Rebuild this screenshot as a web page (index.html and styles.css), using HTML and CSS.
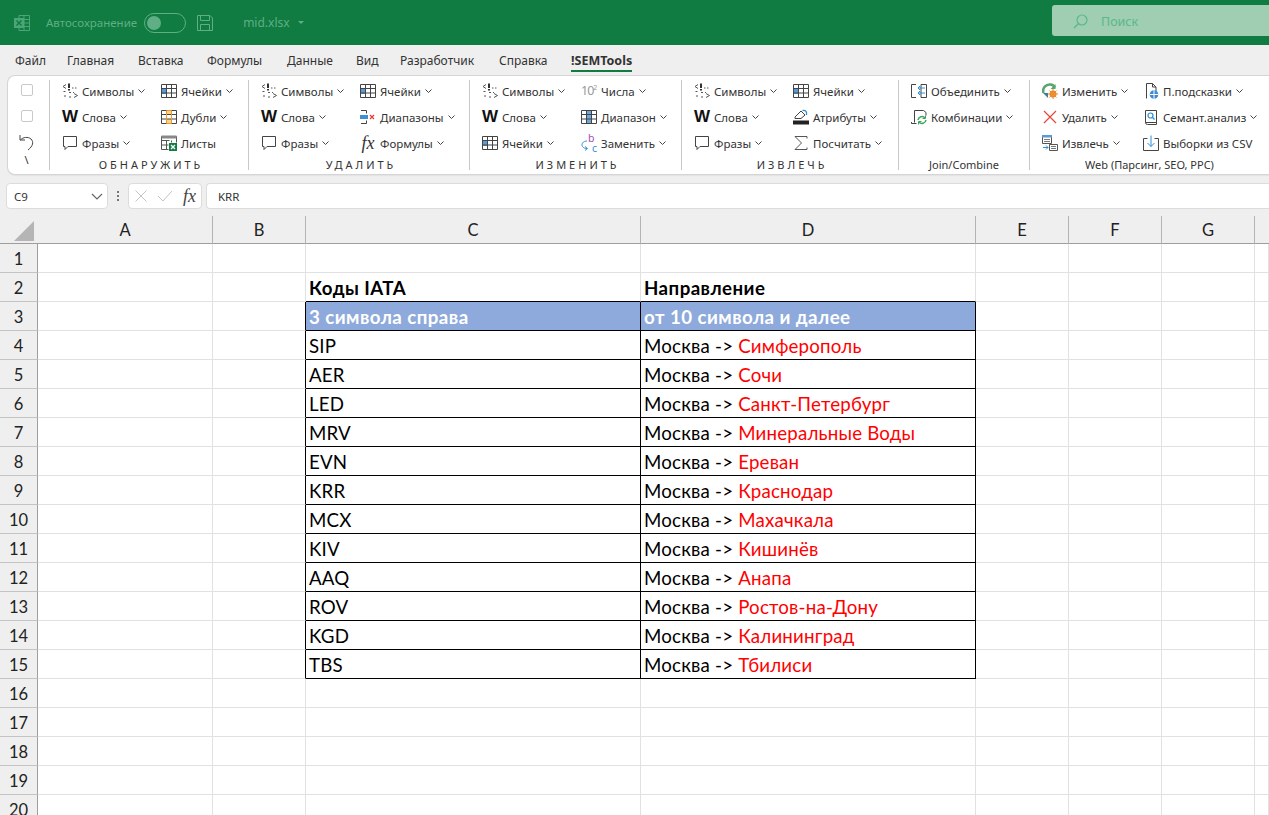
FILE: index.html
```html
<!DOCTYPE html>
<html lang="en">
<head>
    <meta charset="UTF-8">
    <meta name="viewport" content="width=device-width, initial-scale=1.0">
    <title>mid.xlsx</title>
    <link rel="stylesheet" href="styles.css">
</head>
<body>
    <svg class="defs" width="0" height="0">
        <symbol id="chev" viewBox="0 0 7 4"><path d="M.5.5 3.5 3.5 6.5.5" fill="none" stroke="#444"/></symbol>
        <symbol id="chars" viewBox="0 0 16 16"><g fill="none" stroke="#555"><path d="M4 1.500 1 3.500 4 5.500M10 5h1.500M13 5h1.500M1.500 8.500h2M7 9.500h2M11 9.500h1M7 14h2M2 13h2M12 10.500 15.500 12.500 12 14.500"/></g><path d="M6 .5h2v4.500H6zM6 6h2v1.500H6z" fill="#333"/></symbol>
        <symbol id="bubble" viewBox="0 0 16 16"><path d="M1.500 1.500h13v10H6l-3 3v-3H1.500z" fill="#fff" stroke="#444"/></symbol>
        <symbol id="cells" viewBox="0 0 16 16"><rect x="1" y="6" width="5" height="5" fill="#5b9bd5"/><path d="M.5 1.500h15v13H.5zM5.500 1.500v13M10.500 1.500v13M.5 5.500h15M.5 10h15" fill="none" stroke="#444"/></symbol>
        <symbol id="dupes" viewBox="0 0 16 16"><rect x="5.500" y="1.500" width="5" height="4" fill="#fbd38a"/><rect x="5.500" y="10" width="5" height="4.500" fill="#fbd38a"/><path d="M.5 1.500h15v13H.5zM.5 5.500h15M.5 10h15" fill="none" stroke="#444"/><path d="M5.500 1.500h5v13h-5z" fill="none" stroke="#ed9b2c"/></symbol>
        <symbol id="sheets" viewBox="0 0 16 16"><path d="M.5 1.500h15M.5 1.500v13h7M.5 5.500h8M.5 10h7M5.500 5.500v9M10.500 5.500v2M15.500 1.500v6" fill="none" stroke="#555"/><rect x=".5" y=".5" width="15" height="3" fill="#888"/><rect x="8" y="8" width="8" height="8" fill="#107c41"/><path d="M10 10 14 14M14 10 10 14" stroke="#fff" stroke-width="1.300"/></symbol>
        <symbol id="range-x" viewBox="0 0 16 16"><path d="M1 1.500h5.500v3M1 14.500h5.500v-3" fill="none" stroke="#444"/><rect x="0" y="6" width="8" height="4" fill="#3d8fd6"/><path d="M10 6l4 4M14 6l-4 4" stroke="#e53935" stroke-width="1.200"/></symbol>
        <symbol id="range" viewBox="0 0 16 16"><rect x="5.500" y="1.500" width="5" height="13" fill="#6fa8dc"/><path d="M.5 1.500h15v13H.5zM5.500 1.500v13M10.500 1.500v13M.5 5.500h15M.5 10h15" fill="none" stroke="#444"/></symbol>
        <symbol id="replace" viewBox="0 0 16 16"><path d="M6 6C2 6 0 9 1.500 11.500 2.500 13 4 13.500 6 13.500M4 11.500 6.500 13.500 4 15.500" fill="none" stroke="#2d8fd8"/></symbol>
        <symbol id="fill" viewBox="0 0 16 16"><path d="M2 8 8 2l4 4-4 3.500H2z" fill="#fff" stroke="#444"/><path d="M9.500 1.500C13 1 14 3 13.500 6" fill="none" stroke="#2d8fd8" stroke-width="1.300"/><rect y="11.500" width="16" height="4" fill="#222"/></symbol>
        <symbol id="sum" viewBox="0 0 16 16"><path d="M14 3.500V1.500H2L8.500 8 2 14.500h12v-2" fill="none" stroke="#555"/></symbol>
        <symbol id="merge" viewBox="0 0 16 16"><path d="M5 1.500H.5v13H5M10 1.500v13M10 1.500h5.500v13H10" fill="none" stroke="#444"/><path d="M14 5H7M9 3 7 5l2 2M14 10H7M9 8l-2 2 2 2" fill="none" stroke="#2d8fd8"/></symbol>
        <symbol id="combo" viewBox="0 0 16 16"><path d="M3.500 13.500V1.500h9l2.500 2v3M.5 13v1.500h5" fill="none" stroke="#444"/><path d="M7 11a4 4 0 0 1 7-2M15 11a4 4 0 0 1-7 2" fill="none" stroke="#3ca55c" stroke-width="1.500"/><path d="M14.500 6.500v3h-3M7.500 15.500v-3h3" fill="none" stroke="#3ca55c"/></symbol>
        <symbol id="edit" viewBox="0 0 16 16"><path d="M1.500 10C0 5 4 1 8.500 1.500c2 .2 3.500 1.200 4.500 3" fill="none" stroke="#59a56f" stroke-width="2.500"/><path d="M13.500 1v5h-5z" fill="#59a56f"/><path d="M1 10h5v5z" fill="#3f7f8f"/><circle cx="11" cy="11" r="3.500" fill="#ed8b2c"/><circle cx="11" cy="11" r="1.300" fill="#fff"/><path d="M11 6v10M6 11h10M7.500 7.500l7 7M14.500 7.500l-7 7" stroke="#ed8b2c"/></symbol>
        <symbol id="del" viewBox="0 0 16 16"><path d="M2 2 14 14M14 2 2 14" stroke="#e8443a" stroke-width="1.200"/></symbol>
        <symbol id="extract" viewBox="0 0 16 16"><path d="M.5.5h9v8h-9z" fill="#fff" stroke="#555"/><rect y="0" width="10" height="2.500" fill="#5b9bd5"/><path d="M2 4.500h6M2 6.500h6" stroke="#777"/><path d="M7.500 9.500h8v6h-8z" fill="#fff" stroke="#555"/><path d="M9 11.500h5M9 13.500h5" stroke="#777"/><path d="M1 12.500h5M4 10.500l2 2-2 2" fill="none" stroke="#2d8fd8"/></symbol>
        <symbol id="tips" viewBox="0 0 16 16"><path d="M3.500 15.500V.5h6l3.500 3.500v4M9.500.5V4H13" fill="none" stroke="#444"/><circle cx="11" cy="11.500" r="4.300" fill="#3a8ad6"/><path d="M6.700 11.500h8.600M11 7.200v8.600" stroke="#fff"/></symbol>
        <symbol id="semant" viewBox="0 0 16 16"><path d="M2.500 13.500V1.500h11v14h-9a2 2 0 0 1-2-2h11" fill="none" stroke="#444"/><circle cx="7.500" cy="6.500" r="2.500" fill="none" stroke="#2d8fd8" stroke-width="1.200"/><path d="M9.300 8.300 11.500 10.500" stroke="#2d8fd8" stroke-width="1.300"/></symbol>
        <symbol id="csv" viewBox="0 0 16 16"><path d="M.5 3.500h4M11.500 3.500h4v12H.5v-12" fill="none" stroke="#444"/><path d="M8 .5v11M4.500 8 8 11.500 11.500 8" fill="none" stroke="#2d8fd8"/></symbol>
    </svg>

    <header class="titlebar">
        <svg class="xl-logo" width="16" height="16" viewBox="0 0 16 16"><path d="M5 .5h10.500v15H5zM5 4.500h10.500M5 8h10.500M5 11.500h10.500M10 .5v15" fill="none" stroke="#4ba578"/><rect y="3" width="10" height="10" fill="#4ba578"/><path d="M2.500 5.500l5 5M7.500 5.500l-5 5" stroke="#107c41" stroke-width="1.500"/></svg>
        <span class="autosave">Автосохранение</span>
        <span class="toggle"><span class="knob"></span></span>
        <svg class="save" width="16" height="16" viewBox="0 0 16 16"><path d="M.5.500h12.500l2.500 2.500v12.500H.5zM3.500.5v5h9v-5M3.500 15.500v-6h9v6" fill="none" stroke="#5fae85"/></svg>
        <span class="filename">mid.xlsx</span>
        <span class="caret"></span>
        <div class="search">
            <svg width="15" height="15" viewBox="0 0 15 15"><circle cx="9" cy="6" r="5" fill="none" stroke="#5cb888" stroke-width="1.200"/><path d="M5.500 9.500 1 14" stroke="#5cb888" stroke-width="1.400"/></svg>
            <span>Поиск</span>
        </div>
    </header>

    <nav class="tabs">
        <span class="tab">Файл</span>
        <span class="tab">Главная</span>
        <span class="tab">Вставка</span>
        <span class="tab">Формулы</span>
        <span class="tab">Данные</span>
        <span class="tab">Вид</span>
        <span class="tab">Разработчик</span>
        <span class="tab">Справка</span>
        <span class="tab active">!SEMTools</span>
    </nav>

    <section class="ribbon">
        <div class="group group-misc">
            <span class="check"></span>
            <span class="check"></span>
            <svg class="undo" width="16" height="18" viewBox="0 0 16 18"><path d="M1 2v5h5M1.500 7C4 4 9 3.500 12 6c3 3 2 7-3 11" fill="none" stroke="#444"/></svg>
            <span class="slash">\</span>
        </div>

        <div class="group group-find">
            <div class="items">
                <span class="item"><svg class="ic"><use href="#chars"/></svg>Символы<svg class="chev"><use href="#chev"/></svg></span>
                <span class="item"><svg class="ic"><use href="#cells"/></svg>Ячейки<svg class="chev"><use href="#chev"/></svg></span>
                <span class="item"><span class="ic w">W</span>Слова<svg class="chev"><use href="#chev"/></svg></span>
                <span class="item"><svg class="ic"><use href="#dupes"/></svg>Дубли<svg class="chev"><use href="#chev"/></svg></span>
                <span class="item"><svg class="ic"><use href="#bubble"/></svg>Фразы<svg class="chev"><use href="#chev"/></svg></span>
                <span class="item"><svg class="ic"><use href="#sheets"/></svg>Листы</span>
            </div>
            <div class="label spaced">ОБНАРУЖИТЬ</div>
        </div>

        <div class="group group-del">
            <div class="items">
                <span class="item"><svg class="ic"><use href="#chars"/></svg>Символы<svg class="chev"><use href="#chev"/></svg></span>
                <span class="item"><svg class="ic"><use href="#cells"/></svg>Ячейки<svg class="chev"><use href="#chev"/></svg></span>
                <span class="item"><span class="ic w">W</span>Слова<svg class="chev"><use href="#chev"/></svg></span>
                <span class="item"><svg class="ic"><use href="#range-x"/></svg>Диапазоны<svg class="chev"><use href="#chev"/></svg></span>
                <span class="item"><svg class="ic"><use href="#bubble"/></svg>Фразы<svg class="chev"><use href="#chev"/></svg></span>
                <span class="item"><span class="ic fx">fx</span>Формулы<svg class="chev"><use href="#chev"/></svg></span>
            </div>
            <div class="label spaced">УДАЛИТЬ</div>
        </div>

        <div class="group group-change">
            <div class="items">
                <span class="item"><svg class="ic"><use href="#chars"/></svg>Символы<svg class="chev"><use href="#chev"/></svg></span>
                <span class="item"><span class="ic pow">10<sup>2</sup></span>Числа<svg class="chev"><use href="#chev"/></svg></span>
                <span class="item"><span class="ic w">W</span>Слова<svg class="chev"><use href="#chev"/></svg></span>
                <span class="item"><svg class="ic"><use href="#range"/></svg>Диапазон<svg class="chev"><use href="#chev"/></svg></span>
                <span class="item"><svg class="ic"><use href="#cells"/></svg>Ячейки<svg class="chev"><use href="#chev"/></svg></span>
                <span class="item"><span class="ic repl"><svg class="ic"><use href="#replace"/></svg><b class="let-b">b</b><b class="let-c">c</b></span>Заменить<svg class="chev"><use href="#chev"/></svg></span>
            </div>
            <div class="label spaced">ИЗМЕНИТЬ</div>
        </div>

        <div class="group group-extract">
            <div class="items">
                <span class="item"><svg class="ic"><use href="#chars"/></svg>Символы<svg class="chev"><use href="#chev"/></svg></span>
                <span class="item"><svg class="ic"><use href="#cells"/></svg>Ячейки<svg class="chev"><use href="#chev"/></svg></span>
                <span class="item"><span class="ic w">W</span>Слова<svg class="chev"><use href="#chev"/></svg></span>
                <span class="item"><svg class="ic"><use href="#fill"/></svg>Атрибуты<svg class="chev"><use href="#chev"/></svg></span>
                <span class="item"><svg class="ic"><use href="#bubble"/></svg>Фразы<svg class="chev"><use href="#chev"/></svg></span>
                <span class="item"><svg class="ic"><use href="#sum"/></svg>Посчитать<svg class="chev"><use href="#chev"/></svg></span>
            </div>
            <div class="label spaced">ИЗВЛЕЧЬ</div>
        </div>

        <div class="group group-join">
            <div class="items single">
                <span class="item"><svg class="ic"><use href="#merge"/></svg>Объединить<svg class="chev"><use href="#chev"/></svg></span>
                <span class="item"><svg class="ic"><use href="#combo"/></svg>Комбинации<svg class="chev"><use href="#chev"/></svg></span>
            </div>
            <div class="label">Join/Combine</div>
        </div>

        <div class="group group-web">
            <div class="items">
                <span class="item"><svg class="ic"><use href="#edit"/></svg>Изменить<svg class="chev"><use href="#chev"/></svg></span>
                <span class="item"><svg class="ic"><use href="#tips"/></svg>П.подсказки<svg class="chev"><use href="#chev"/></svg></span>
                <span class="item"><svg class="ic"><use href="#del"/></svg>Удалить<svg class="chev"><use href="#chev"/></svg></span>
                <span class="item"><svg class="ic"><use href="#semant"/></svg>Семант.анализ<svg class="chev"><use href="#chev"/></svg></span>
                <span class="item"><svg class="ic"><use href="#extract"/></svg>Извлечь<svg class="chev"><use href="#chev"/></svg></span>
                <span class="item"><svg class="ic"><use href="#csv"/></svg>Выборки из CSV</span>
            </div>
            <div class="label">Web (Парсинг, SEO, PPC)</div>
        </div>
    </section>

    <div class="formula-bar">
        <div class="name-box">C9<svg width="12" height="7" viewBox="0 0 12 7"><path d="M1 1l5 5 5-5" fill="none" stroke="#666" stroke-width="1.200"/></svg></div>
        <span class="grip"></span>
        <div class="fx-box">
            <svg width="12" height="12" viewBox="0 0 12 12"><path d="M.5.5l11 11M11.500.5l-11 11" stroke="#c4c4c4"/></svg>
            <svg width="16" height="12" viewBox="0 0 16 12"><path d="M1 6l5 5L15 1" fill="none" stroke="#c4c4c4"/></svg>
            <span class="fx-sign">fx</span>
        </div>
        <div class="formula-input">KRR</div>
    </div>

    <table class="sheet">
        <colgroup>
            <col class="c-head"><col class="c-a"><col class="c-b"><col class="c-wide"><col class="c-wide"><col class="c-n"><col class="c-n"><col class="c-n"><col>
        </colgroup>
        <thead>
            <tr><th class="corner"><span class="tri"></span></th><th>A</th><th>B</th><th>C</th><th>D</th><th>E</th><th>F</th><th>G</th><th></th></tr>
        </thead>
        <tbody>
            <tr><th>1</th><td></td><td></td><td></td><td></td><td></td><td></td><td></td><td></td></tr>
            <tr><th>2</th><td></td><td></td><td class="title">Коды IATA</td><td class="title">Направление</td><td></td><td></td><td></td><td></td></tr>
            <tr><th>3</th><td></td><td class="edge"></td><td class="box fill">3 символа справа</td><td class="box fill">от 10 символа и далее</td><td></td><td></td><td></td><td></td></tr>
            <tr><th>4</th><td></td><td class="edge"></td><td class="box">SIP</td><td class="box">Москва -&gt; <span class="red">Симферополь</span></td><td></td><td></td><td></td><td></td></tr>
            <tr><th>5</th><td></td><td class="edge"></td><td class="box">AER</td><td class="box">Москва -&gt; <span class="red">Сочи</span></td><td></td><td></td><td></td><td></td></tr>
            <tr><th>6</th><td></td><td class="edge"></td><td class="box">LED</td><td class="box">Москва -&gt; <span class="red">Санкт-Петербург</span></td><td></td><td></td><td></td><td></td></tr>
            <tr><th>7</th><td></td><td class="edge"></td><td class="box">MRV</td><td class="box">Москва -&gt; <span class="red">Минеральные Воды</span></td><td></td><td></td><td></td><td></td></tr>
            <tr><th>8</th><td></td><td class="edge"></td><td class="box">EVN</td><td class="box">Москва -&gt; <span class="red">Ереван</span></td><td></td><td></td><td></td><td></td></tr>
            <tr><th>9</th><td></td><td class="edge"></td><td class="box">KRR</td><td class="box">Москва -&gt; <span class="red">Краснодар</span></td><td></td><td></td><td></td><td></td></tr>
            <tr><th>10</th><td></td><td class="edge"></td><td class="box">MCX</td><td class="box">Москва -&gt; <span class="red">Махачкала</span></td><td></td><td></td><td></td><td></td></tr>
            <tr><th>11</th><td></td><td class="edge"></td><td class="box">KIV</td><td class="box">Москва -&gt; <span class="red">Кишинёв</span></td><td></td><td></td><td></td><td></td></tr>
            <tr><th>12</th><td></td><td class="edge"></td><td class="box">AAQ</td><td class="box">Москва -&gt; <span class="red">Анапа</span></td><td></td><td></td><td></td><td></td></tr>
            <tr><th>13</th><td></td><td class="edge"></td><td class="box">ROV</td><td class="box">Москва -&gt; <span class="red">Ростов-на-Дону</span></td><td></td><td></td><td></td><td></td></tr>
            <tr><th>14</th><td></td><td class="edge"></td><td class="box">KGD</td><td class="box">Москва -&gt; <span class="red">Калининград</span></td><td></td><td></td><td></td><td></td></tr>
            <tr><th>15</th><td></td><td class="edge"></td><td class="box">TBS</td><td class="box">Москва -&gt; <span class="red">Тбилиси</span></td><td></td><td></td><td></td><td></td></tr>
            <tr><th>16</th><td></td><td></td><td></td><td></td><td></td><td></td><td></td><td></td></tr>
            <tr><th>17</th><td></td><td></td><td></td><td></td><td></td><td></td><td></td><td></td></tr>
            <tr><th>18</th><td></td><td></td><td></td><td></td><td></td><td></td><td></td><td></td></tr>
            <tr><th>19</th><td></td><td></td><td></td><td></td><td></td><td></td><td></td><td></td></tr>
            <tr><th>20</th><td></td><td></td><td></td><td></td><td></td><td></td><td></td><td></td></tr>
        </tbody>
    </table>
</body>
</html>
```

FILE: styles.css
```css
html, body {
    height: 100%;
    overflow: hidden;
}
body {
    margin: 0;
    background: #efefef;
    color: #333;
    font-family: "Noto Sans", "Open Sans", sans-serif;
    font-size: 11.5px;
}
.defs {
    display: block;
    height: 0;
}

/* title bar */
.titlebar {
    display: flex;
    align-items: center;
    height: 45px;
    background: #107c41;
    padding-left: 14px;
    color: #5fae85;
}
.autosave {
    margin-left: 16px;
    font-size: 11.5px;
}
.toggle {
    display: flex;
    align-items: center;
    box-sizing: border-box;
    width: 42px;
    height: 20px;
    margin-left: 7px;
    border: 1px solid #5fae85;
    border-radius: 10px;
    padding-left: 2px;
}
.knob {
    width: 14px;
    height: 14px;
    border-radius: 50%;
    background: #5fae85;
}
.save {
    margin-left: 11px;
}
.filename {
    margin-left: 30px;
    font-size: 12px;
}
.caret {
    margin-left: 8px;
    border: 3px solid transparent;
    border-top: 3px solid #5fae85;
    border-bottom: none;
}
.search {
    display: flex;
    align-items: center;
    gap: 13px;
    box-sizing: border-box;
    width: 217px;
    height: 31px;
    margin-left: auto;
    margin-top: -4px;
    padding: 1px 0 0 21px;
    background: #9fceb3;
    border-radius: 3px 0 0 3px;
    color: #5cb888;
    font-size: 12.5px;
}

/* tabs */
.tabs {
    display: grid;
    grid-template-columns: 52px 71px 69px 80px 69px 44px 99px 72px auto;
    align-items: center;
    height: 30px;
    padding-left: 15px;
    font-size: 12px;
}
.tab.active {
    position: relative;
    justify-self: start;
    font-size: 12.5px;
    font-weight: 700;
}
.tab.active::after {
    content: "";
    position: absolute;
    left: 0;
    right: 0;
    bottom: -3px;
    height: 2px;
    background: #107c41;
}

/* ribbon */
.ribbon {
    display: flex;
    box-sizing: border-box;
    height: 100px;
    margin-left: 7px;
    background: #fff;
    border: 1px solid #d5d5d5;
    border-right: none;
    border-radius: 8px 0 0 8px;
    padding: 4px 0;
    box-shadow: 0 1px 1px rgba(0,0,0,0.05);
}
.group {
    display: flex;
    flex-direction: column;
    box-sizing: border-box;
    border-right: 1px solid #c8c8c8;
    padding-left: 12px;
}
.group-misc {
    width: 42px;
    align-items: center;
    padding: 4px 4px 0 0;
}
.group-find { width: 199px; }
.group-del { width: 221px; }
.group-change { width: 212px; }
.group-extract { width: 217px; }
.group-join { width: 131px; }
.group-web {
    flex: 1;
    border-right: none;
}
.check {
    box-sizing: border-box;
    width: 12px;
    height: 12px;
    margin-bottom: 14px;
    border: 1px solid #c9c9c9;
    border-radius: 2px;
}
.undo {
    margin-top: -3px;
}
.slash {
    margin-top: 3px;
    font-size: 11px;
    line-height: 12px;
}
.items {
    display: grid;
    flex: none;
    grid-template-columns: 99px auto;
    grid-auto-rows: 26px;
    height: 78px;
    margin-top: -2px;
}
.items.single {
    grid-template-columns: auto;
}
.group-web .items {
    grid-template-columns: 101px auto;
}
.item {
    display: flex;
    align-items: center;
    white-space: nowrap;
}
.ic {
    flex: none;
    width: 16px;
    height: 16px;
    margin-right: 4px;
}
.chev {
    width: 7px;
    height: 4px;
    margin-left: 4px;
}
.w {
    color: #111;
    font: 700 17px/16px "Liberation Sans", sans-serif;
    letter-spacing: -1px;
}
.fx {
    font: italic 18px/16px "Liberation Serif", serif;
    text-align: center;
}
.pow {
    color: #999;
    font-size: 12.5px;
    line-height: 16px;
    letter-spacing: -1px;
    white-space: nowrap;
}
.pow sup {
    font-size: 7px;
    line-height: 0;
}
.repl {
    position: relative;
}
.let-b, .let-c {
    position: absolute;
    font-size: 10.5px;
    font-weight: 400;
    line-height: 8px;
}
.let-b {
    left: 7px;
    top: -1px;
    color: #a44cb0;
}
.let-c {
    left: 11px;
    top: 9px;
    color: #2d8fd8;
}
.label {
    flex: none;
    margin-left: -12px;
    text-align: center;
    font-size: 11px;
    line-height: 18px;
}
.spaced {
    letter-spacing: 3px;
    padding-left: 4px;
}

/* formula bar */
.formula-bar {
    display: flex;
    align-items: stretch;
    height: 26px;
    margin: 8px 0 7px 6px;
}
.name-box, .fx-box, .formula-input {
    display: flex;
    align-items: center;
    box-sizing: border-box;
    background: #fff;
    border: 1px solid #dcdcdc;
    border-radius: 4px;
}
.name-box {
    justify-content: space-between;
    width: 102px;
    padding: 0 4px 0 7px;
}
.grip {
    width: 2px;
    height: 10px;
    margin: 8px 9px 0 9px;
    background: repeating-linear-gradient(#777 0 2px, transparent 2px 4px);
}
.fx-box {
    gap: 10px;
    width: 74px;
    padding-left: 6px;
}
.fx-sign {
    color: #444;
    font: italic 18px "Liberation Serif", serif;
}
.formula-input {
    flex: 1;
    margin-left: 4px;
    padding-left: 11px;
    border-right: none;
    border-radius: 4px 0 0 4px;
}

/* sheet */
.sheet {
    width: 1269px;
    table-layout: fixed;
    border-collapse: separate;
    border-spacing: 0;
    font-family: "Lato", "Carlito", sans-serif;
    font-size: 16.5px;
    color: #000;
}
.c-head { width: 38px; }
.c-a { width: 175px; }
.c-b { width: 93px; }
.c-wide { width: 335px; }
.c-n { width: 93px; }
.sheet thead th {
    height: 28px;
    padding: 0;
    box-sizing: border-box;
    background: #efefef;
    border-right: 1px solid #b4b4b4;
    border-bottom: 1px solid #9e9e9e;
    font-weight: 400;
    color: #222;
}
.sheet thead th:last-child {
    border-right: none;
}
.sheet .corner {
    position: relative;
    border-right: none;
}
.tri {
    position: absolute;
    left: 14px;
    top: 5px;
    border-left: 20px solid transparent;
    border-bottom: 20px solid #b5b5b5;
}
.sheet tbody th {
    box-sizing: border-box;
    height: 29px;
    padding: 2px 0 0;
    background: #efefef;
    border-right: 1px solid #9e9e9e;
    border-bottom: 1px solid #c4c4c4;
    font-weight: 400;
    color: #222;
}
.sheet td {
    box-sizing: border-box;
    height: 29px;
    padding: 2px 3px 0;
    background: #fff;
    border-right: 1px solid #e1e1e1;
    border-bottom: 1px solid #e1e1e1;
    font-size: 18.7px;
    line-height: 24px;
    letter-spacing: 0.2px;
    white-space: nowrap;
}
.sheet .title {
    font-weight: 700;
    letter-spacing: 0.45px;
    border-bottom-color: #000;
}
.sheet .edge {
    border-right-color: #000;
}
.sheet .box {
    border-right-color: #000;
    border-bottom-color: #000;
}
.sheet .fill {
    background: #8ea9db;
    color: #fff;
    font-weight: 700;
    letter-spacing: 0.45px;
}
.red {
    color: #f00;
}
```
